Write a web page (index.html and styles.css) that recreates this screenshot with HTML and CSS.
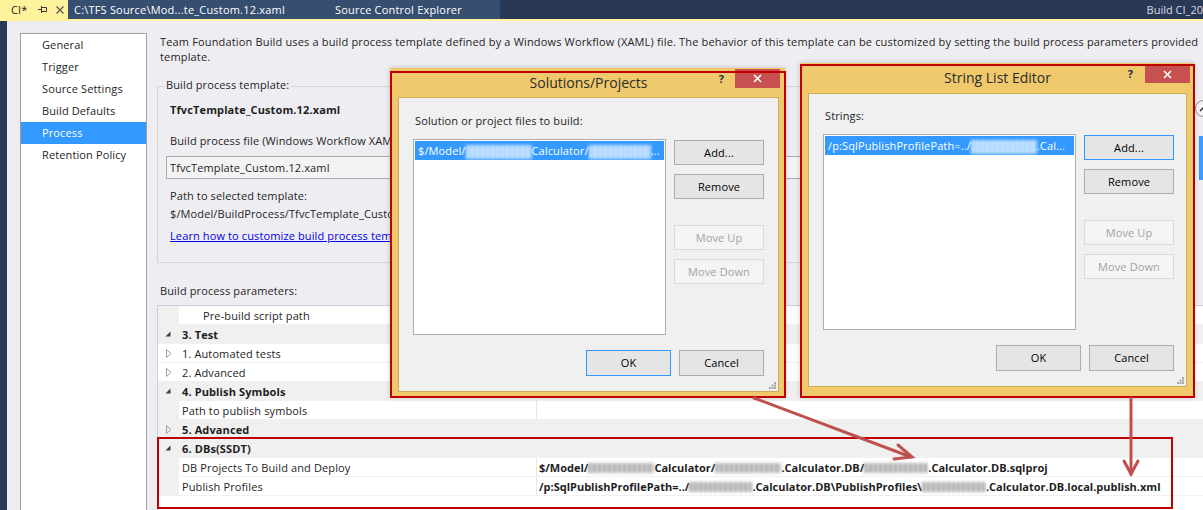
FILE: index.html
```html
<!DOCTYPE html>
<html>
<head>
<meta charset="utf-8">
<title>Build Definition - Process</title>
<link rel="stylesheet" href="styles.css">
</head>
<body>
<div class="app">
  <div class="tabbar">
    <div class="tab tab-active">
      <span>CI*</span>
      <svg class="pin" width="9" height="9" viewBox="0 0 9 9"><path d="M0 4.5H3M3.5 1V8M3.5 2.5H8.5V6.5H3.5" fill="none" stroke="#3a3a3a" stroke-width="1"/></svg>
      <svg class="tclose" width="8" height="8" viewBox="0 0 8 8"><path d="M0.5 0.5L7.5 7.5M7.5 0.5L0.5 7.5" stroke="#555" stroke-width="1.2"/></svg>
    </div>
    <div class="tab tab-group">
      <span class="doc">C:\TFS Source\Mod...te_Custom.12.xaml</span>
      <span>Source Control Explorer</span>
    </div>
    <span class="tab-title">Build CI_20</span>
  </div>
  <div class="tabline"></div>
  <div class="workspace">
    <div class="edge"></div>
    <nav class="nav">
      <div class="nav-item">General</div>
      <div class="nav-item">Trigger</div>
      <div class="nav-item">Source Settings</div>
      <div class="nav-item">Build Defaults</div>
      <div class="nav-item selected">Process</div>
      <div class="nav-item">Retention Policy</div>
    </nav>
    <main class="content">
      <p class="desc">Team Foundation Build uses a build process template defined by a Windows Workflow (XAML) file. The behavior of this template can be customized by setting the build process parameters provided<br>template.</p>
      <div class="top-row">
        <section class="groupbox">
          <div class="gb-label">Build process template:</div>
          <div class="gb-name">TfvcTemplate_Custom.12.xaml</div>
          <div class="gb-field">Build process file (Windows Workflow XAML):</div>
          <div class="combo">TfvcTemplate_Custom.12.xaml</div>
          <div class="gb-path-label">Path to selected template:</div>
          <div class="gb-path">$/Model/BuildProcess/TfvcTemplate_Custom.12.xaml</div>
          <a class="gb-link" href="#">Learn how to customize build process templates</a>
        </section>
        <div class="side">
          <div class="collapse-btn"><svg width="10" height="6" viewBox="0 0 10 6"><path d="M1 5L5 1L9 5" fill="none" stroke="#333" stroke-width="1.5"/></svg></div>
          <div class="side-btn"></div>
        </div>
      </div>
      <div class="params-label">Build process parameters:</div>
      <div class="grid">
        <div class="row prop"><div class="gutter"></div><div class="name indent">Pre-build script path</div><div class="value"></div></div>
        <div class="row cat"><div class="gutter"><svg class="exp" width="6" height="6" viewBox="0 0 6 6"><path d="M5.5 0.5V5.5H0.5Z" fill="#3c3c3c"/></svg></div><div class="label">3. Test</div></div>
        <div class="row sub"><div class="gutter"><svg class="col" width="6" height="9" viewBox="0 0 6 9"><path d="M0.5 0.5L5 4.5L0.5 8.5Z" fill="none" stroke="#a0a0a0"/></svg></div><div class="label">1. Automated tests</div></div>
        <div class="row sub"><div class="gutter"><svg class="col" width="6" height="9" viewBox="0 0 6 9"><path d="M0.5 0.5L5 4.5L0.5 8.5Z" fill="none" stroke="#a0a0a0"/></svg></div><div class="label">2. Advanced</div></div>
        <div class="row cat"><div class="gutter"><svg class="exp" width="6" height="6" viewBox="0 0 6 6"><path d="M5.5 0.5V5.5H0.5Z" fill="#3c3c3c"/></svg></div><div class="label">4. Publish Symbols</div></div>
        <div class="row prop"><div class="gutter"></div><div class="name">Path to publish symbols</div><div class="value"></div></div>
        <div class="row cat"><div class="gutter"><svg class="col" width="6" height="9" viewBox="0 0 6 9"><path d="M0.5 0.5L5 4.5L0.5 8.5Z" fill="none" stroke="#a0a0a0"/></svg></div><div class="label">5. Advanced</div></div>
        <div class="row cat"><div class="gutter"><svg class="exp" width="6" height="6" viewBox="0 0 6 6"><path d="M5.5 0.5V5.5H0.5Z" fill="#3c3c3c"/></svg></div><div class="label">6. DBs(SSDT)</div></div>
        <div class="row prop"><div class="gutter"></div><div class="name">DB Projects To Build and Deploy</div><div class="value strong">$/Model/<span class="blur" style="width:66px"></span>Calculator/<span class="blur" style="width:66px"></span>.Calculator.DB/<span class="blur" style="width:64px"></span>.Calculator.DB.sqlproj</div></div>
        <div class="row prop"><div class="gutter"></div><div class="name">Publish Profiles</div><div class="value strong">/p:SqlPublishProfilePath=../<span class="blur" style="width:63px"></span>.Calculator.DB\PublishProfiles\<span class="blur" style="width:64px"></span>.Calculator.DB.local.publish.xml</div></div>
        <div class="row empty"></div>
      </div>
    </main>
  </div>
</div>

<div class="dialog dlg1">
  <div class="dlg-title">Solutions/Projects
    <span class="dlg-help">?</span>
    <span class="dlg-close"><svg width="9" height="9" viewBox="0 0 9 9"><path d="M1 1L8 8M8 1L1 8" stroke="#fff" stroke-width="1.6"/></svg></span>
  </div>
  <div class="dlg-client">
    <div class="dlg-label">Solution or project files to build:</div>
    <div class="dlg-body">
      <div class="listbox">
        <div class="list-item">$/Model/<span class="blur light" style="width:66px"></span>Calculator/<span class="blur light" style="width:62px"></span>...</div>
      </div>
      <div class="btn-col">
        <div class="btn">Add...</div>
        <div class="btn">Remove</div>
        <div class="btn disabled gap-lg">Move Up</div>
        <div class="btn disabled">Move Down</div>
      </div>
    </div>
    <div class="dlg-footer">
      <div class="btn wide focus">OK</div>
      <div class="btn wide">Cancel</div>
    </div>
    <svg class="grip" width="7" height="7" viewBox="0 0 7 7"><g fill="#a8a8a8"><rect x="5" y="0" width="2" height="2"/><rect x="2.5" y="2.5" width="2" height="2"/><rect x="5" y="2.5" width="2" height="2"/><rect x="0" y="5" width="2" height="2"/><rect x="2.5" y="5" width="2" height="2"/><rect x="5" y="5" width="2" height="2"/></g></svg>
  </div>
</div>

<div class="dialog dlg2">
  <div class="dlg-title">String List Editor
    <span class="dlg-help">?</span>
    <span class="dlg-close"><svg width="9" height="9" viewBox="0 0 9 9"><path d="M1 1L8 8M8 1L1 8" stroke="#fff" stroke-width="1.6"/></svg></span>
  </div>
  <div class="dlg-client">
    <div class="dlg-label">Strings:</div>
    <div class="dlg-body">
      <div class="listbox">
        <div class="list-item">/p:SqlPublishProfilePath=../<span class="blur light" style="width:66px"></span>.Cal...</div>
      </div>
      <div class="btn-col">
        <div class="btn focus">Add...</div>
        <div class="btn">Remove</div>
        <div class="btn disabled gap-lg">Move Up</div>
        <div class="btn disabled">Move Down</div>
      </div>
    </div>
    <div class="dlg-footer">
      <div class="btn wide">OK</div>
      <div class="btn wide">Cancel</div>
    </div>
    <svg class="grip" width="7" height="7" viewBox="0 0 7 7"><g fill="#a8a8a8"><rect x="5" y="0" width="2" height="2"/><rect x="2.5" y="2.5" width="2" height="2"/><rect x="5" y="2.5" width="2" height="2"/><rect x="0" y="5" width="2" height="2"/><rect x="2.5" y="5" width="2" height="2"/><rect x="5" y="5" width="2" height="2"/></g></svg>
  </div>
</div>

<div class="annot annot-d1"></div>
<div class="annot annot-d2"></div>
<div class="annot annot-grid"></div>

<svg class="arrows" width="1203" height="510" viewBox="0 0 1203 510">
  <g stroke="#c0504d" stroke-width="3" fill="none" stroke-linecap="round" stroke-linejoin="miter">
    <path d="M754 398L911 457"/>
    <path d="M898 445L912 457L894 459"/>
    <path d="M1131 398V474"/>
    <path d="M1124 461L1131 474L1138 461"/>
  </g>
</svg>
</body>
</html>
```

FILE: styles.css
```css
* { box-sizing: border-box; margin: 0; padding: 0; }
html, body { width: 1203px; height: 510px; overflow: hidden; }
body {
  position: relative;
  font-family: "Open Sans", "Noto Sans", sans-serif;
  font-size: 11px;
  letter-spacing: 0.12px;
  color: #1e1e1e;
  background: #eeeef2;
}

/* tab bar */
.tabbar { height: 19px; background: #293955; display: flex; white-space: nowrap; overflow: hidden; }
.tab { display: flex; align-items: center; height: 19px; }
.tab-active { width: 68px; background: #fff29d; color: #1e1e1e; padding-left: 11px; }
.tab-active .pin { margin-left: 11px; }
.tab-active .tclose { margin-left: 9px; }
.tab-group { width: 432px; background: #364e6f; color: #fff; padding-left: 6px; letter-spacing: 0.2px; }
.tab-group .doc { width: 261px; }
.tab-title { margin-left: auto; color: #d6dbe4; line-height: 19px; letter-spacing: 0; }
.tabline { height: 2px; background: #fff29d; }

/* workspace */
.workspace { display: flex; height: 489px; }
.edge { width: 7px; background: #293955; flex: none; }
.nav { width: 127px; flex: none; margin: 12px 0 0 13px; background: #fff; border: 1px solid #a0a0a0; border-bottom: none; }
.nav-item { height: 22px; line-height: 22px; padding-left: 21px; }
.nav-item.selected { background: #3399ff; color: #fff; }

.content { margin-left: 10px; padding-top: 13px; width: 1046px; flex: none; }
.desc { padding-left: 3px; line-height: 15px; white-space: nowrap; letter-spacing: 0.16px; }

.top-row { display: flex; margin-top: 22px; }
.groupbox { width: 1034px; flex: none; border: 1px solid #d5d5d5; padding: 0 0 18px 12px; white-space: nowrap; }
.gb-label { display: block; width: max-content; margin: -10px 0 0 -6px; padding: 0 2px; background: #eeeef2; line-height: 16px; }
.gb-name { font-weight: bold; line-height: 16px; margin-top: 9px; }
.gb-field { line-height: 16px; margin-top: 15px; }
.combo { margin: 7px 0 0 -4px; width: 1015px; height: 23px; border: 1px solid #acacac; background: #f3f3f3; line-height: 21px; padding-left: 3px; }
.gb-path-label { line-height: 16px; margin-top: 9px; }
.gb-path { line-height: 16px; margin-top: 2px; }
.gb-link { display: block; line-height: 16px; margin-top: 6px; color: #0000ee; text-decoration: underline; }

.side { display: flex; flex-direction: column; margin-left: 4px; }
.collapse-btn { width: 17px; height: 17px; margin-top: 14px; border: 1px solid #8a8a8a; border-radius: 50%; background: #f4f4f4; display: flex; align-items: center; justify-content: center; }
.side-btn { width: 40px; height: 44px; margin: 19px 0 0 4px; border: 1px solid #3399ff; background: #3d9cff; }

.params-label { padding-left: 3px; line-height: 16px; margin-top: 20px; }

/* property grid */
.grid { margin-top: 6px; border-top: 1px solid #cccedb; border-left: 1px solid #cccedb; background: #fff; height: 210px; }
.row { display: flex; height: 19px; line-height: 20px; border-bottom: 1px solid #f0f0f0; white-space: nowrap; }
.gutter { width: 21px; flex: none; background: #f0f0f0; display: flex; align-items: center; padding-left: 7px; }
.name { width: 358px; flex: none; padding-left: 3px; border-right: 1px solid #e6e6e6; }
.name.indent { padding-left: 24px; }
.value { flex: 1; padding-left: 2px; }
.value.strong { font-weight: bold; letter-spacing: 0; }
.row.cat { background: #f0f0f0; }
.row.cat .label { padding-left: 3px; font-weight: bold; }
.row.sub .label { padding-left: 3px; }
.row.sub .gutter { background: #fff; }
.row.empty { border-bottom: none; }
.gutter .col { margin-left: 1px; }

.blur {
  display: inline-block;
  height: 10px;
  vertical-align: -1px;
  background: repeating-linear-gradient(90deg, #8e8e8e 0 3px, #d2d2d2 3px 5px);
  filter: blur(1.6px);
  opacity: 0.75;
}
.blur.light {
  height: 14px;
  vertical-align: -4px;
  background: repeating-linear-gradient(90deg, #d8ecff 0 3px, #9fcfff 3px 5px);
  opacity: 0.95;
}

/* dialogs */
.dialog { position: absolute; background: #f0c96c; display: flex; flex-direction: column; box-shadow: 0 0 5px rgba(0,0,0,0.2); }
.dlg1 { left: 390px; top: 68px; width: 395px; height: 329px; padding: 0 6px 5px 8px; }
.dlg2 { left: 800px; top: 63px; width: 394px; height: 334px; padding: 0 7px 10px 8px; }
.dlg-title { height: 29px; line-height: 29px; text-align: center; font-size: 14px; letter-spacing: 0; color: #2b2b2b; flex: none; }
.dlg2 .dlg-title { height: 30px; line-height: 30px; }
.dlg-help { position: absolute; top: 5px; right: 61px; font-weight: bold; font-size: 11px; color: #1c2a4d; line-height: 12px; }
.dlg-close { position: absolute; top: 1px; right: 5px; width: 45px; height: 19px; background: #c75050; display: flex; align-items: center; justify-content: center; }
.dlg2 .dlg-close { top: 2px; right: 4px; height: 18px; }
.dlg-client { flex: 1; position: relative; background: #f0f0f0; border: 1px solid #d0ab55; padding: 15px 0 0 14px; }
.dlg2 .dlg-client { padding-top: 14px; }
.dlg-label { padding-left: 2px; line-height: 16px; }
.dlg-body { display: flex; margin-top: 10px; }
.listbox { width: 253px; height: 196px; background: #fff; border: 1px solid #abadb3; padding: 1px; }
.list-item { height: 19px; line-height: 19px; background: #3399ff; color: #fff; padding-left: 3px; white-space: nowrap; overflow: hidden; }
.btn-col { display: flex; flex-direction: column; gap: 9px; margin: 1px 0 0 8px; width: 90px; }
.btn { height: 25px; border: 1px solid #adadad; background: #e5e5e5; text-align: center; line-height: 23px; color: #000; }
.btn.gap-lg { margin-top: 17px; }
.btn.disabled { background: #f4f4f4; border-color: #d9d9d9; color: #a3a3a3; }
.btn.focus { border-color: #3399ff; }
.btn.wide { width: 85px; height: 26px; line-height: 24px; }
.dlg-footer { display: flex; gap: 8px; margin: 15px 0 0 173px; }
.grip { position: absolute; right: 2px; bottom: 2px; }

/* annotations */
.annot { position: absolute; border: 2px solid #c00000; pointer-events: none; }
.annot-d1 { left: 390px; top: 71px; width: 396px; height: 327px; }
.annot-d2 { left: 800px; top: 64px; width: 395px; height: 334px; }
.annot-grid { left: 157px; top: 437px; width: 1016px; height: 72px; }
.arrows { position: absolute; left: 0; top: 0; pointer-events: none; }
```
